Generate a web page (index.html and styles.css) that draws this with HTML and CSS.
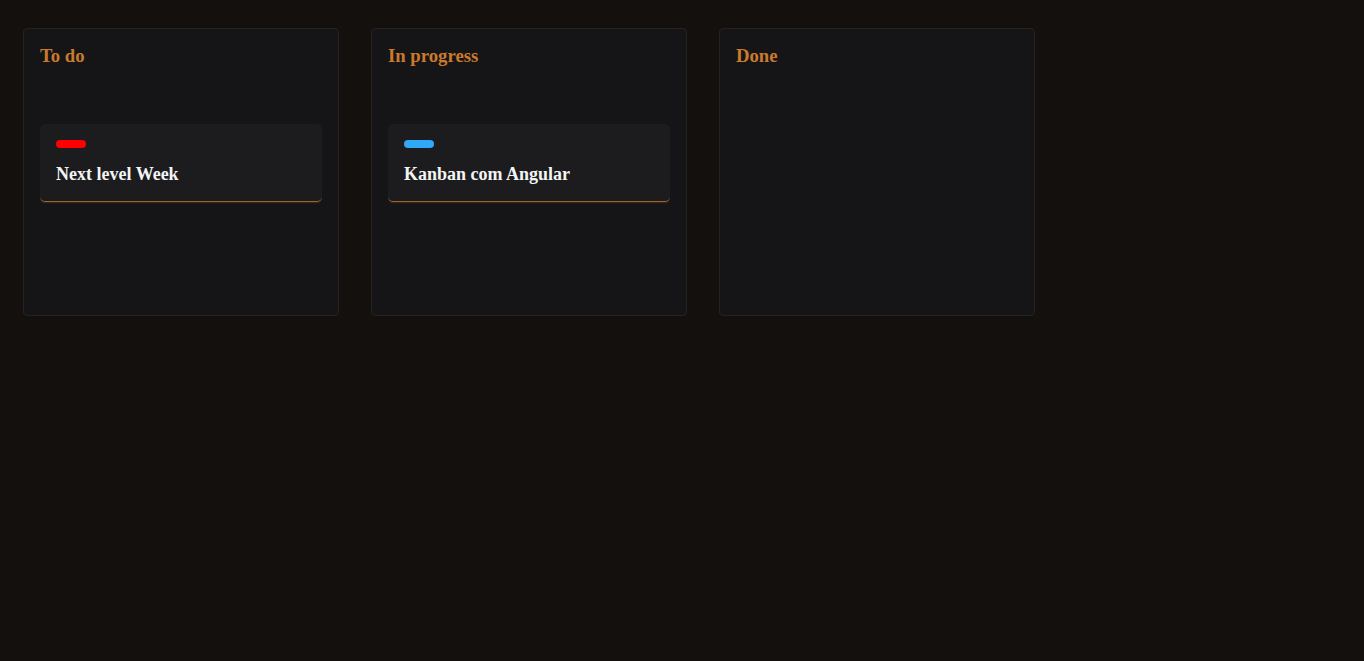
FILE: index.html
```html
<!DOCTYPE html>
<html lang="pt">
<head>
<meta charset="utf-8">
<title>Kanban</title>
<link rel="stylesheet" href="styles.css">
</head>
<body>
<main class="board">
  <section class="column">
    <h3 class="column-title">To do</h3>
    <div class="card-list">
      <article class="card">
        <span class="tag tag-red"></span>
        <h4 class="card-title">Next level Week</h4>
      </article>
    </div>
  </section>
  <section class="column">
    <h3 class="column-title">In progress</h3>
    <div class="card-list">
      <article class="card">
        <span class="tag tag-blue"></span>
        <h4 class="card-title">Kanban com Angular</h4>
      </article>
    </div>
  </section>
  <section class="column">
    <h3 class="column-title">Done</h3>
    <div class="card-list"></div>
  </section>
</main>
</body>
</html>
```
FILE: styles.css
```css
html, body {
  margin: 0;
  height: 100%;
  background: #13100e;
}
body {
  font-family: "Liberation Serif", "Times New Roman", serif;
}
.board {
  display: flex;
  align-items: flex-start;
  gap: 32px;
  padding: 28px 23px;
}
.column {
  box-sizing: border-box;
  width: 316px;
  height: 288px;
  padding: 16px;
  background: #151517;
  border: 1px solid #26221f;
  border-radius: 4px;
}
.column-title {
  margin: 0 0 58px;
  font-size: 18.72px;
  line-height: 21px;
  font-weight: bold;
  color: #c97a2c;
}
.card-list {
  display: flex;
  flex-direction: column;
  gap: 16px;
}
.card {
  display: flex;
  flex-direction: column;
  align-items: flex-start;
  padding: 16px;
  background: #1c1c1e;
  border-radius: 5px;
  border-bottom: 1px solid #a0652b;
  box-shadow: 0 2px 2px -1px rgba(120, 75, 30, 0.4);
}
.tag {
  display: block;
  width: 30px;
  height: 8px;
  border-radius: 4px;
  margin-bottom: 16px;
}
.tag-red { background: #ff0000; }
.tag-blue { background: #2fa8f5; }
.card-title {
  margin: 0;
  font-size: 18px;
  line-height: 21px;
  font-weight: bold;
  color: #f4f4f4;
}
```
